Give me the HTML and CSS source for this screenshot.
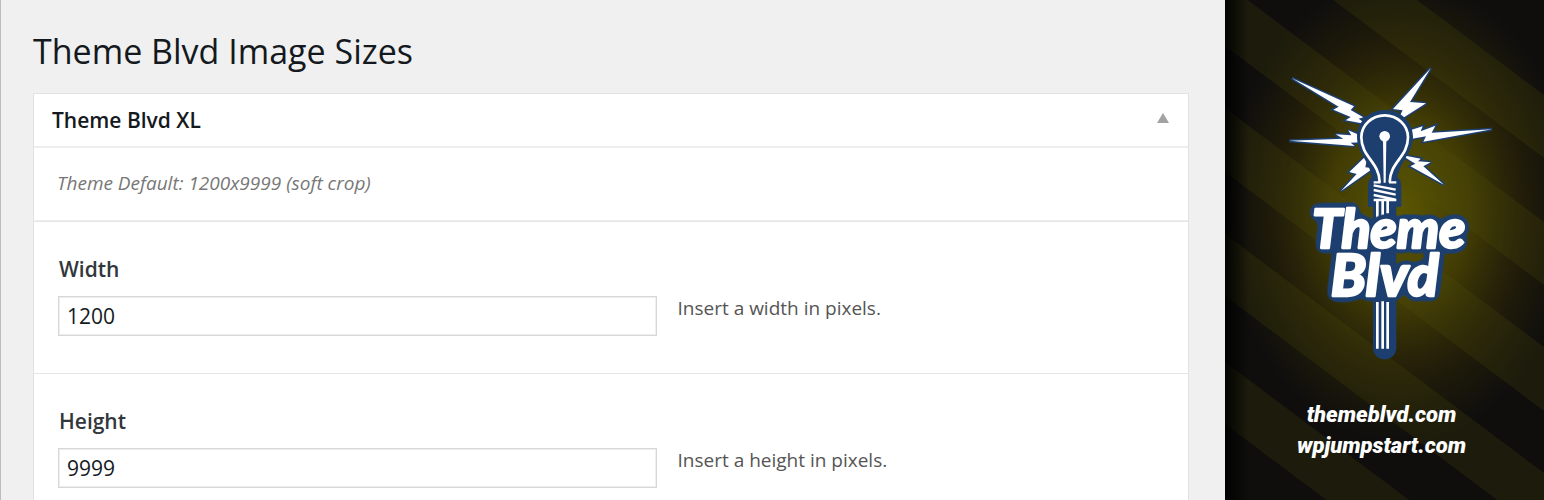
FILE: index.html
```html
<!DOCTYPE html>
<html lang="en">
<head>
<meta charset="utf-8">
<title>Theme Blvd Image Sizes</title>
<link rel="stylesheet" href="styles.css">
</head>
<body>
<main class="settings">
  <h1 class="page-title">Theme Blvd Image Sizes</h1>
  <section class="panel">
    <header class="panel-head">
      <h2 class="panel-title">Theme Blvd XL</h2>
      <button class="toggle" type="button" aria-label="Toggle section">
        <svg class="toggle-icon" viewBox="0 0 12 10" aria-hidden="true"><path d="M6 0 12 10H0z"/></svg>
      </button>
    </header>
    <p class="panel-note">Theme Default: 1200x9999 (soft crop)</p>
    <div class="field">
      <label class="field-label" for="width">Width</label>
      <input class="field-input" id="width" type="text" value="1200">
      <p class="field-help">Insert a width in pixels.</p>
    </div>
    <div class="field">
      <label class="field-label" for="height">Height</label>
      <input class="field-input" id="height" type="text" value="9999">
      <p class="field-help">Insert a height in pixels.</p>
    </div>
  </section>
</main>
<aside class="brand">
  <svg class="stripes" viewBox="0 0 319 500" preserveAspectRatio="xMidYMid slice" aria-hidden="true">
    <defs>
      <radialGradient id="glow" gradientUnits="userSpaceOnUse" cx="0" cy="0" r="1" gradientTransform="translate(175 210) scale(175 235)">
        <stop offset="0" stop-color="#6a6400" stop-opacity=".85"/>
        <stop offset=".4" stop-color="#5c5400" stop-opacity=".66"/>
        <stop offset=".7" stop-color="#4a3e00" stop-opacity=".32"/>
        <stop offset="1" stop-color="#403400" stop-opacity="0"/>
      </radialGradient>
      <linearGradient id="edge">
        <stop offset="0" stop-color="#000" stop-opacity=".9"/>
        <stop offset="1" stop-color="#000" stop-opacity="0"/>
      </linearGradient>
    </defs>
    <rect width="319" height="500" fill="#0f0e0d"/>
    <rect width="319" height="500" fill="url(#glow)"/>
    <path d="M0-144 319 95V158L0-81zM0-17 319 222V285L0 46zM0 108 319 347V411L0 172zM0 234 319 473V535L0 296zM0 362 319 601V663L0 424z" fill="#55550a" fill-opacity=".2"/>
    <rect width="24" height="500" fill="url(#edge)"/>
  </svg>
  <svg class="logo" viewBox="0 0 660 915" role="img" aria-label="Theme Blvd">
    <defs>
      <filter id="outline" x="-20%" y="-20%" width="140%" height="140%" color-interpolation-filters="sRGB">
        <feGaussianBlur in="SourceAlpha" stdDeviation="13"/>
        <feComponentTransfer result="halo"><feFuncA type="linear" slope="12" intercept="-1"/></feComponentTransfer>
        <feFlood flood-color="#1c3f70"/>
        <feComposite in2="halo" operator="in" result="edge"/>
        <feMerge><feMergeNode in="edge"/><feMergeNode in="SourceGraphic"/></feMerge>
      </filter>
    </defs>
    <g fill="#fff" stroke="#1c3f70" stroke-width="9" stroke-linejoin="miter" stroke-miterlimit="3" paint-order="stroke">
      <path d="M36 55 222 139 212 150 250 172 236 176 260 193 197 181 212 171 160 149 176 140z"/>
      <path d="M452 25 390 126 438 130 350 186 368 151 339 147z"/>
      <path d="M28 242 190 236 167 223 214 226 205 211 254 232 254 246 212 248 224 258z"/>
      <path d="M636 208 430 245 438 229 376 240 374 216 428 199 422 214 466 197 455 218z"/>
      <path d="M183 393 230 342 208 336 264 282 256 322 280 325z"/>
      <path d="M492 374 391 319 406 311 362 284 422 296 414 304 452 307 430 319z"/>
    </g>
    <path d="M315 150C267 150 231 186 231 231 231 276 269 306 276 352Q264 360 264 380V440H364V380Q364 360 352 352C360 306 399 276 399 231 399 186 363 150 315 150z" fill="#1c3f70"/>
    <path d="M314 420V862" stroke="#1c3f70" stroke-width="70"/>
    <path d="M314 862V863" stroke="#1c3f70" stroke-width="70" stroke-linecap="round"/>
    <path d="M299 367C299 307 244 291 244 232 244 195 276 166 314 166S384 195 384 232C384 291 329 307 329 367" fill="#1c3f70" stroke="#fff" stroke-width="8"/>
    <circle cx="314" cy="229" r="16" fill="#fff"/>
    <path d="M309 240H319L317 368H311z" fill="#fff"/>
    <path d="M281 367H302M327 367H349M281 376 347 389M281 390 347 404M281 405 347 419M281 420H349" fill="none" stroke="#fff" stroke-width="7"/>
    <path d="M292 420V478M308 420V470M323 420V460M292 726V866M308 724V866M323 726V866" stroke="#fff" stroke-width="8"/>
    <g class="wordmark" filter="url(#outline)">
      <text class="word-top" x="96" y="564">Theme</text>
      <text class="word-bottom" x="152" y="708">Blvd</text>
    </g>
  </svg>
  <nav class="brand-links" aria-label="Websites">
    <a class="brand-link" href="#themeblvd">themeblvd.com</a>
    <a class="brand-link" href="#wpjumpstart">wpjumpstart.com</a>
  </nav>
</aside>
</body>
</html>
```
FILE: styles.css
```css
* {
  box-sizing: border-box;
}

body {
  display: flex;
  height: 100vh;
  margin: 0;
  overflow: hidden;
  background: #f0f0f0;
  color: #14191d;
  font-family: "Open Sans", "Noto Sans", sans-serif;
}

.settings {
  flex: 1;
  min-width: 0;
  padding: 26px 36px 0 32px;
  border-left: 1px solid #bcbcbc;
}

.page-title {
  margin: 0 0 17px;
  font-size: 34px;
  font-weight: 400;
  line-height: 50px;
}

.panel {
  border: 1px solid #e2e2e2;
  background: #fff;
}

.panel-head {
  display: flex;
  align-items: center;
  justify-content: space-between;
  padding: 12px 18px;
}

.panel-title {
  margin: 0;
  font-size: 21px;
  font-weight: 600;
  line-height: 28px;
}

.toggle {
  display: flex;
  padding: 0 1px 4px;
  border: 0;
  background: none;
}

.toggle-icon {
  width: 12px;
  height: 10px;
  fill: #a0a2a4;
}

.panel-note {
  margin: 0;
  padding: 20px 23px 22px;
  border-top: 2px solid #eee;
  border-bottom: 1px solid #eee;
  color: #777;
  font-size: 19px;
  font-style: italic;
  line-height: 30px;
}

.field {
  display: grid;
  grid-template-columns: 21fr 17fr;
  column-gap: 21px;
  padding: 32px 26px 37px 24px;
  border-top: 1px solid #e6e6e6;
}

.field-label {
  grid-column: 1 / -1;
  margin: 0 0 12px 1px;
  color: #32373c;
  font-size: 21px;
  font-weight: 600;
  line-height: 30px;
}

.field-input {
  min-width: 0;
  width: 100%;
  height: 40px;
  padding: 0 8px;
  border: 1px solid #d6d6d6;
  background: #fff;
  box-shadow: inset 0 0 1px 1px #eee;
  color: #14191d;
  font-family: inherit;
  font-size: 21px;
}

.field-help {
  margin: 0;
  color: #555;
  font-size: 19px;
  line-height: 24px;
}

.brand {
  display: flex;
  position: relative;
  flex: 0 0 319px;
  flex-direction: column;
  align-items: center;
  padding-top: 60px;
  background: #0f0e0d;
}

.stripes {
  position: absolute;
  inset: 0;
  width: 100%;
  height: 100%;
}

.logo {
  position: relative;
  width: 220px;
  height: 305px;
  margin-left: 11px;
}

.wordmark {
  fill: #fff;
  stroke: #fff;
  stroke-width: 7px;
  stroke-linejoin: round;
  font-family: Lato, sans-serif;
  font-style: italic;
  font-weight: 900;
}

.word-top {
  font-size: 160px;
}

.word-bottom {
  font-size: 172px;
}

.brand-links {
  display: flex;
  position: relative;
  flex-direction: column;
  align-items: center;
  margin-top: 34px;
  padding-right: 6px;
}

.brand-link {
  color: #fff;
  font-family: Roboto, sans-serif;
  font-size: 22px;
  font-style: italic;
  font-weight: 900;
  line-height: 31px;
  text-decoration: none;
}
```
